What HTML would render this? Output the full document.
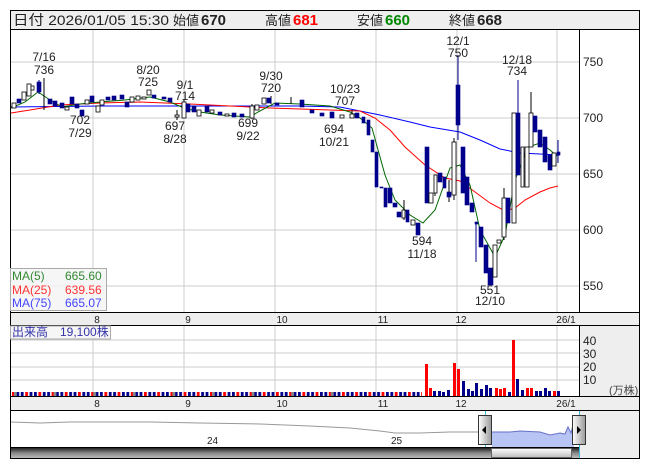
<!DOCTYPE html>
<html><head><meta charset="utf-8"><style>
body{margin:0;background:#fff;width:653px;height:470px;overflow:hidden}
svg{display:block;font-family:"Liberation Sans","Noto Sans CJK JP",sans-serif}
.b{fill:#00008b;stroke:#00008b;stroke-width:.6}
.w{fill:#fff;stroke:#000;stroke-width:.8}
.g line{stroke:#ccc;stroke-width:1}
.ann{font-size:12px;fill:#222;text-anchor:middle;dominant-baseline:middle}
.ax{font-size:12px;fill:#222}
.dx{font-size:10px;fill:#222;text-anchor:middle}
</style></head><body>
<svg width="653" height="470" viewBox="0 0 653 470">
<defs>
<pattern id="vp" x="12" y="0" width="13.2" height="10" patternUnits="userSpaceOnUse">
<rect x="0" y="0" width="2.8" height="10" fill="#f00"/><rect x="4.4" y="0" width="2.8" height="10" fill="#00008b"/><rect x="8.8" y="0" width="2.8" height="10" fill="#00008b"/>
</pattern>
<pattern id="vp2" x="14" y="0" width="39.6" height="10" patternUnits="userSpaceOnUse">
<rect x="0" y="0" width="2.8" height="10" fill="#888"/>
</pattern>
<linearGradient id="sb" x1="0" y1="0" x2="0" y2="1"><stop offset="0" stop-color="#222"/><stop offset=".5" stop-color="#888"/><stop offset="1" stop-color="#bbb"/></linearGradient>
<linearGradient id="th" x1="0" y1="0" x2="0" y2="1"><stop offset="0" stop-color="#fff"/><stop offset="1" stop-color="#bbb"/></linearGradient>
<linearGradient id="hd" x1="0" y1="0" x2="1" y2="0"><stop offset="0" stop-color="#fff"/><stop offset="1" stop-color="#999"/></linearGradient>
</defs>
<rect x="10.5" y="10.5" width="629" height="448" fill="#fff" stroke="#000"/>
<rect x="11" y="11" width="628" height="18" fill="#eee"/>
<line x1="10" y1="29.5" x2="640" y2="29.5" stroke="#000"/>
<g font-size="14" fill="#222">
<text x="13" y="25" textLength="156" lengthAdjust="spacingAndGlyphs">日付 2026/01/05 15:30</text>
<text x="173" y="25" font-size="13">始値</text><text x="201" y="25" font-weight="bold" font-size="15">670</text>
<text x="265" y="25" font-size="13">高値</text><text x="293" y="25" font-weight="bold" font-size="15" fill="#f00">681</text>
<text x="357" y="25" font-size="13">安値</text><text x="385" y="25" font-weight="bold" font-size="15" fill="#080">660</text>
<text x="449" y="25" font-size="13">終値</text><text x="477" y="25" font-weight="bold" font-size="15">668</text>
</g>
<rect x="580" y="30" width="59" height="282" fill="#fff"/>
<rect x="580" y="325" width="59" height="71" fill="#eee"/>
<rect x="580" y="410" width="59" height="48" fill="#eee"/>
<line x1="579.5" y1="30" x2="579.5" y2="458" stroke="#000"/>
<g class="g">
<line x1="11" y1="62" x2="579" y2="62"/><line x1="11" y1="118" x2="579" y2="118"/><line x1="11" y1="174" x2="579" y2="174"/><line x1="11" y1="230" x2="579" y2="230"/><line x1="11" y1="286" x2="579" y2="286"/>
<line x1="93" y1="30" x2="93" y2="312"/><line x1="184" y1="30" x2="184" y2="312"/><line x1="275" y1="30" x2="275" y2="312"/><line x1="376" y1="30" x2="376" y2="312"/><line x1="457" y1="30" x2="457" y2="312"/><line x1="557" y1="30" x2="557" y2="312"/>
</g>
<g class="ax"><text x="583" y="66">750</text><text x="583" y="122">700</text><text x="583" y="178">650</text><text x="583" y="234">600</text><text x="583" y="290">550</text></g>
<polyline fill="none" stroke="#00f" stroke-width="1" points="11,107 100,106 200,106 300,106 340,107 380,115 410,122 430,127 460,132 480,140 500,149 520,153 540,154 560,155"/>
<polyline fill="none" stroke="#f00" stroke-width="1" points="11,113 30,110 60,105 100,103 140,102 190,104 230,106 270,108 330,110 360,111 375,118 390,130 405,147 425,165 445,178 460,181 475,192 490,203 505,211 515,208 525,200 540,192 550,188 558,186"/>
<polyline fill="none" stroke="#060" stroke-width="1" points="11,108 25,102 38,92 50,100 62,107 80,104 100,102 125,100 150,97 170,102 184,108 200,112 220,115 250,117 258,112 275,103 300,104 330,106 350,112 360,118 372,128 385,175 395,200 410,215 423,223 435,210 450,168 460,165 470,185 480,230 495,257 505,235 515,180 528,147 540,143 550,150 557,156"/>
<g>
<line x1="44" y1="78" x2="44" y2="110" stroke="#000"/><line x1="39" y1="80" x2="39" y2="94" stroke="#00008b"/>
<rect class="w" x="12" y="103" width="4" height="5"/><rect class="b" x="17" y="99" width="4" height="4"/><rect class="w" x="22" y="92" width="4" height="8"/><rect class="w" x="27" y="84" width="4" height="12"/><rect class="w" x="31" y="86" width="3" height="4"/><rect class="b" x="37" y="82" width="4" height="10"/><rect class="b" x="48" y="99" width="4" height="5"/><rect class="b" x="53" y="101" width="4" height="5"/><rect class="b" x="60" y="103" width="4" height="5"/><rect class="w" x="65" y="107" width="4" height="3"/><rect class="b" x="70" y="97" width="4" height="7"/><rect class="b" x="75" y="104" width="4" height="4"/><rect class="b" x="80" y="110" width="4" height="6"/><rect class="w" x="85" y="100" width="4" height="4"/><rect class="b" x="90" y="96" width="4" height="6"/><rect class="w" x="96" y="106" width="4" height="6"/><rect class="w" x="100" y="100" width="4" height="5"/><rect class="b" x="106" y="97" width="4" height="3"/><rect class="b" x="112" y="96" width="4" height="4"/><rect class="b" x="120" y="95" width="4" height="4"/><rect class="b" x="125" y="102" width="4" height="5"/><rect class="w" x="130" y="97" width="4" height="5"/><rect class="w" x="136" y="96" width="4" height="4"/><rect class="w" x="142" y="97" width="4" height="2"/><rect class="w" x="147" y="90" width="4" height="5"/><rect class="b" x="152" y="95" width="4" height="3"/><rect class="b" x="162" y="97" width="4" height="2"/><rect class="b" x="168" y="98" width="4" height="4"/>
<line x1="177" y1="110" x2="177" y2="120" stroke="#000"/><rect class="w" x="175" y="115" width="4" height="2"/><line x1="184" y1="100" x2="184" y2="118" stroke="#000"/><rect class="w" x="182" y="102" width="4" height="16"/><rect class="b" x="186" y="104" width="4" height="8"/><rect class="b" x="192" y="106" width="4" height="6"/><rect class="w" x="197" y="110" width="4" height="6"/><rect class="b" x="205" y="106" width="4" height="6"/><rect class="w" x="210" y="110" width="4" height="3"/><rect class="b" x="218" y="112" width="4" height="3"/><rect class="w" x="225" y="114" width="4" height="2"/><rect class="b" x="232" y="113" width="4" height="4"/><rect class="b" x="240" y="114" width="4" height="3"/><line x1="252" y1="104" x2="252" y2="119" stroke="#000"/><rect class="w" x="250" y="106" width="4" height="12"/><rect class="w" x="255" y="105" width="4" height="5"/><rect class="w" x="262" y="98" width="4" height="6"/><line x1="271" y1="96" x2="271" y2="104" stroke="#000"/><rect class="b" x="267" y="98" width="4" height="5"/><rect class="b" x="275" y="103" width="4" height="2"/><line x1="291" y1="97" x2="291" y2="104" stroke="#000"/><rect class="b" x="300" y="100" width="4" height="7"/><rect class="b" x="310" y="110" width="4" height="3"/><rect class="b" x="320" y="113" width="4" height="3"/><rect class="b" x="330" y="112" width="4" height="6"/><rect class="w" x="340" y="115" width="4" height="3"/><line x1="352" y1="110" x2="352" y2="118" stroke="#000"/><rect class="w" x="350" y="114" width="4" height="4"/><rect class="b" x="355" y="113" width="4" height="5"/>
</g>
<g>
<line x1="458" y1="55" x2="458" y2="140" stroke="#00008b"/><line x1="518" y1="80" x2="518" y2="175" stroke="#00008b"/><line x1="531" y1="92" x2="531" y2="147" stroke="#000"/><line x1="476" y1="222" x2="476" y2="262" stroke="#00008b"/><line x1="435" y1="175" x2="435" y2="196" stroke="#000"/><line x1="404" y1="200" x2="404" y2="220" stroke="#000"/><line x1="449" y1="180" x2="449" y2="202" stroke="#000"/><line x1="454" y1="138" x2="454" y2="200" stroke="#000"/><line x1="504" y1="188" x2="504" y2="240" stroke="#000"/><line x1="558" y1="140" x2="558" y2="163" stroke="#00008b"/>
<rect class="b" x="362" y="117" width="3" height="6"/><rect class="b" x="367" y="120" width="3" height="15"/><rect class="b" x="371" y="140" width="3" height="12"/><rect class="b" x="375" y="152" width="3" height="35"/><rect class="b" x="380" y="187" width="3" height="1"/><rect class="b" x="384" y="188" width="3" height="19"/><rect class="b" x="388" y="188" width="4" height="15"/><rect class="b" x="393" y="203" width="4" height="4"/><rect class="b" x="397" y="212" width="4" height="5"/><rect class="w" x="402" y="210" width="3" height="8"/><rect class="b" x="406" y="210" width="3" height="12"/><rect class="w" x="411" y="220" width="4" height="5"/><rect class="b" x="416" y="223" width="4" height="12"/><rect class="b" x="425" y="147" width="4" height="56"/><rect class="w" x="429" y="193" width="4" height="10"/><rect class="w" x="434" y="175" width="3" height="18"/><rect class="b" x="438" y="173" width="4" height="9"/><rect class="b" x="443" y="177" width="3" height="11"/><rect class="b" x="447" y="192" width="4" height="5"/><rect class="w" x="452" y="142" width="4" height="53"/><rect class="b" x="456" y="85" width="4" height="40"/><rect class="b" x="461" y="147" width="4" height="46"/><rect class="b" x="465" y="177" width="4" height="28"/><rect class="b" x="470" y="203" width="4" height="9"/><rect class="b" x="475" y="222" width="3" height="2"/><rect class="b" x="479" y="227" width="4" height="20"/><rect class="b" x="484" y="245" width="4" height="28"/><rect class="b" x="488" y="268" width="5" height="17"/><rect class="w" x="493" y="245" width="4" height="32"/><rect class="w" x="497" y="240" width="4" height="3"/><rect class="w" x="502" y="198" width="4" height="39"/><rect class="b" x="506" y="198" width="4" height="25"/><rect class="w" x="512" y="113" width="4" height="110"/><rect class="b" x="516" y="113" width="4" height="62"/><rect class="w" x="521" y="147" width="3" height="40"/><rect class="w" x="525" y="147" width="4" height="40"/><rect class="w" x="529" y="113" width="4" height="34"/><rect class="b" x="533" y="116" width="4" height="16"/><rect class="b" x="538" y="130" width="4" height="17"/><rect class="b" x="543" y="137" width="4" height="25"/><rect class="b" x="548" y="155" width="4" height="15"/><rect class="w" x="552" y="153" width="4" height="13"/><rect class="b" x="557" y="152" width="3" height="3"/>
</g>
<g class="ann">
<text x="44" y="58">7/16</text><text x="44" y="71">736</text>
<text x="148" y="71">8/20</text><text x="148" y="83">725</text>
<text x="185" y="86">9/1</text><text x="185" y="97">714</text>
<text x="80" y="121">702</text><text x="80" y="134">7/29</text>
<text x="175" y="127">697</text><text x="175" y="140">8/28</text>
<text x="271" y="77">9/30</text><text x="271" y="89">720</text>
<text x="248" y="124">699</text><text x="248" y="137">9/22</text>
<text x="345" y="90">10/23</text><text x="345" y="102">707</text>
<text x="334" y="130">694</text><text x="334" y="143">10/21</text>
<text x="458" y="42">12/1</text><text x="458" y="54">750</text>
<text x="517" y="61">12/18</text><text x="517" y="72">734</text>
<text x="422" y="242">594</text><text x="422" y="255">11/18</text>
<text x="490" y="291">551</text><text x="490" y="302">12/10</text>
</g>
<rect x="10.5" y="268.5" width="96" height="42" fill="#f4f4f4" fill-opacity=".85" stroke="#aaa"/>
<g font-size="12"><text x="12" y="280" fill="#383">MA(5)</text><text x="65" y="280" fill="#383">665.60</text>
<text x="12" y="294" fill="#f33">MA(25)</text><text x="65" y="294" fill="#f33">639.56</text>
<text x="12" y="307" fill="#44f">MA(75)</text><text x="65" y="307" fill="#44f">665.07</text></g>
<rect x="11" y="312" width="628" height="13" fill="#eee"/>
<line x1="10" y1="312.5" x2="640" y2="312.5" stroke="#000"/><line x1="10" y1="325.5" x2="640" y2="325.5" stroke="#000"/>
<g class="dx"><text x="97" y="323">8</text><text x="188" y="323">9</text><text x="282" y="323">10</text><text x="383" y="323">11</text><text x="461" y="323">12</text><text x="566" y="323">26/1</text></g>
<g class="g">
<line x1="11" y1="340" x2="579" y2="340"/><line x1="11" y1="353" x2="579" y2="353"/><line x1="11" y1="367" x2="579" y2="367"/><line x1="11" y1="380" x2="579" y2="380"/>
<line x1="93" y1="326" x2="93" y2="396"/><line x1="184" y1="326" x2="184" y2="396"/><line x1="275" y1="326" x2="275" y2="396"/><line x1="376" y1="326" x2="376" y2="396"/><line x1="457" y1="326" x2="457" y2="396"/><line x1="557" y1="326" x2="557" y2="396"/>
</g>
<rect x="12" y="392" width="410" height="5" fill="url(#vp)"/>
<rect x="12" y="392" width="330" height="5" fill="url(#vp2)"/>
<g fill="#f00"><rect x="425" y="364" width="3" height="33"/><rect x="429" y="388" width="3" height="9"/><rect x="453" y="363" width="3" height="34"/><rect x="457" y="369" width="3" height="28"/><rect x="495" y="388" width="3" height="9"/><rect x="499" y="389" width="3" height="8"/><rect x="503" y="388" width="3" height="9"/><rect x="512" y="340" width="3" height="57"/><rect x="526" y="388" width="3" height="9"/><rect x="530" y="388" width="3" height="9"/><rect x="553" y="391" width="3" height="6"/></g>
<g fill="#00008b"><rect x="433" y="391" width="3" height="6"/><rect x="438" y="391" width="3" height="6"/><rect x="442" y="392" width="3" height="5"/><rect x="447" y="390" width="3" height="7"/><rect x="462" y="381" width="3" height="16"/><rect x="467" y="389" width="3" height="8"/><rect x="471" y="391" width="3" height="6"/><rect x="475" y="383" width="3" height="14"/><rect x="480" y="389" width="3" height="8"/><rect x="485" y="385" width="3" height="12"/><rect x="489" y="388" width="3" height="9"/><rect x="508" y="392" width="3" height="5"/><rect x="516" y="379" width="3" height="18"/><rect x="521" y="390" width="3" height="7"/><rect x="535" y="391" width="3" height="6"/><rect x="539" y="391" width="3" height="6"/><rect x="544" y="388" width="3" height="9"/><rect x="548" y="391" width="3" height="6"/><rect x="557" y="391" width="3" height="6"/></g>
<rect x="10.5" y="326" width="100" height="13" fill="#f4f4f4" fill-opacity=".85" stroke="#aaa"/>
<text x="12" y="336" font-size="12" fill="#33a">出来高　19,100株</text>
<g class="ax"><text x="583" y="345">40</text><text x="583" y="358">30</text><text x="583" y="371">20</text><text x="583" y="384">10</text><text x="609" y="394" font-size="11" fill="#444">(万株)</text></g>
<rect x="11" y="396" width="628" height="14" fill="#eee"/>
<line x1="10" y1="396.5" x2="640" y2="396.5" stroke="#000"/><line x1="10" y1="410.5" x2="640" y2="410.5" stroke="#000"/>
<g class="dx"><text x="97" y="407">8</text><text x="188" y="407">9</text><text x="282" y="407">10</text><text x="383" y="407">11</text><text x="461" y="407">12</text><text x="566" y="407">26/1</text></g>
<polyline fill="none" stroke="#999" stroke-width="1" points="11,422 40,423 70,422 100,422 150,422 200,423 260,424 310,426 350,428 380,431 395,433 420,433 450,432 485,432"/>
<polygon fill="#b8c4f4" points="492,432 510,432 520,431 540,432 550,435 560,433 565,434 568,427 571,433 573,425 574,448 492,448"/>
<polyline fill="none" stroke="#6670c8" stroke-width="1" points="492,432 510,432 520,431 540,432 550,435 560,433 565,434 568,427 571,433 573,425"/>
<line x1="485.5" y1="411" x2="485.5" y2="458" stroke="#3bd"/><line x1="579.5" y1="411" x2="579.5" y2="458" stroke="#3bd"/>
<text x="207" y="444" font-size="10" fill="#222">24</text><text x="391" y="444" font-size="10" fill="#222">25</text>
<rect x="11" y="448" width="480" height="10" fill="url(#sb)"/>
<rect x="491.5" y="448.5" width="80" height="9" fill="url(#th)" stroke="#666"/>
<rect x="572" y="448" width="7" height="10" fill="url(#sb)"/>
<line x1="10" y1="447.5" x2="579" y2="447.5" stroke="#000"/>
<rect x="478.5" y="415.5" width="13" height="29" fill="url(#hd)" stroke="#333"/><polygon points="482,430 486,426 486,434" fill="#000"/>
<rect x="572.5" y="415.5" width="13" height="29" fill="url(#hd)" stroke="#333"/><polygon points="581,430 577,426 577,434" fill="#000"/>
</svg>
</body></html>
